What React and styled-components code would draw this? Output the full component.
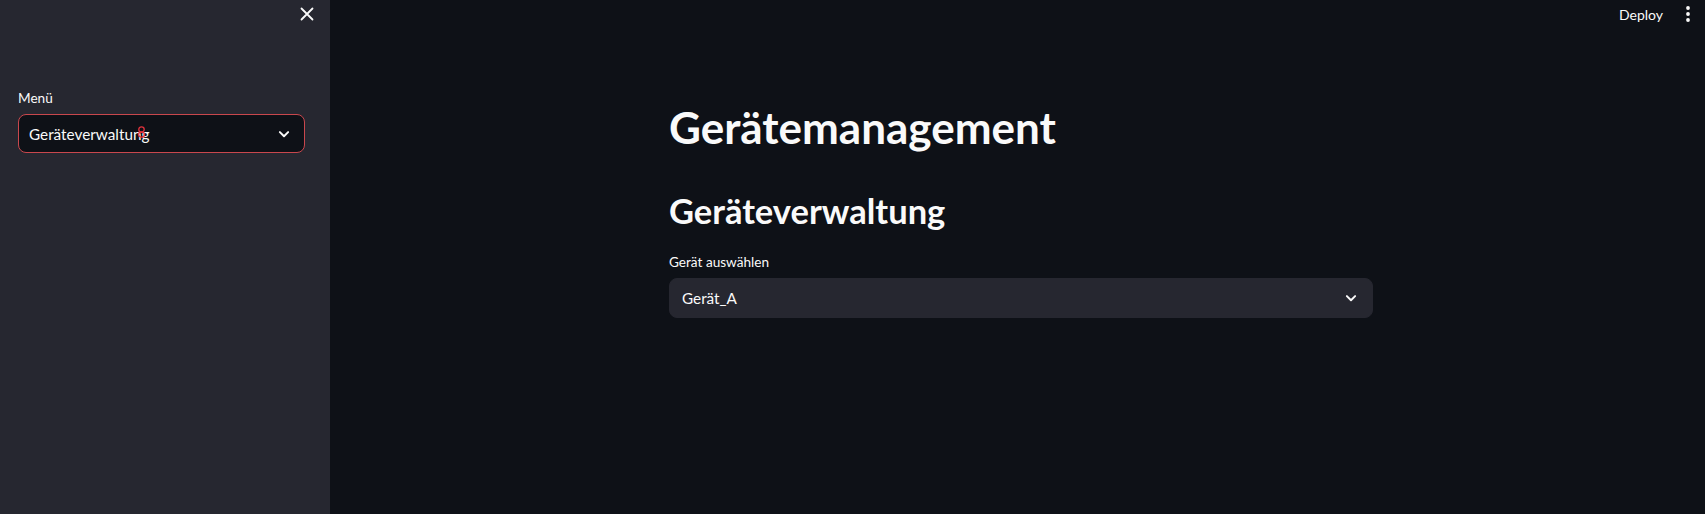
import React from "react";
import styled, { createGlobalStyle } from "styled-components";

const GlobalStyle = createGlobalStyle`
  html, body {
    margin: 0;
    padding: 0;
    background: #0e1117;
  }
  body {
    font-family: "Lato", "Noto Sans", sans-serif;
    color: #fafafa;
  }
`;

function ChevronDown({ size = 18 }) {
  return (
    <svg width={size} height={size} viewBox="0 0 24 24" fill="none">
      <path
        d="M6.5 9.5L12 15l5.5-5.5"
        stroke="#fafafa"
        strokeWidth="2.6"
        strokeLinecap="round"
        strokeLinejoin="round"
      />
    </svg>
  );
}

function CloseIcon() {
  return (
    <svg width="14" height="14" viewBox="0 0 14 14" fill="none">
      <path d="M1.5 1.5l11 11M12.5 1.5l-11 11" stroke="#fafafa" strokeWidth="1.8" strokeLinecap="round" />
    </svg>
  );
}

function MoreIcon() {
  return (
    <svg width="6" height="18" viewBox="0 0 6 18" fill="#fafafa">
      <circle cx="3" cy="3" r="1.9" />
      <circle cx="3" cy="9" r="1.9" />
      <circle cx="3" cy="15" r="1.9" />
    </svg>
  );
}

function PointerMark() {
  return (
    <svg width="9" height="12" viewBox="0 0 9 12" fill="none">
      <ellipse cx="4.5" cy="3.4" rx="2.7" ry="2.6" stroke="#e2323c" strokeWidth="1.3" />
      <path d="M1.5 8.4c0-1.4 1.3-2.2 3-2.2s3 0.8 3 2.2-1.3 2.7-3 2.7-3-1.3-3-2.7z" stroke="#e2323c" strokeWidth="1.3" />
    </svg>
  );
}

export default function App() {
  return (
    <>
      <GlobalStyle />
      <Page>
        <Sidebar>
          <SidebarHeader>
            <IconButton>
              <CloseIcon />
            </IconButton>
          </SidebarHeader>
          <SidebarBody>
            <Label>Menü</Label>
            <Select focused>
              <SelectValue>Geräteverwaltung</SelectValue>
              <ChevronDown />
              <Cursor>
                <PointerMark />
              </Cursor>
            </Select>
          </SidebarBody>
        </Sidebar>
        <Main>
          <Toolbar>
            <DeployButton>Deploy</DeployButton>
            <IconButton>
              <MoreIcon />
            </IconButton>
          </Toolbar>
          <Content>
            <Title>Gerätemanagement</Title>
            <Subtitle>Geräteverwaltung</Subtitle>
            <Label>Gerät auswählen</Label>
            <Select>
              <SelectValue>Gerät_A</SelectValue>
              <ChevronDown />
            </Select>
          </Content>
        </Main>
      </Page>
    </>
  );
}

const Page = styled.div`
  display: flex;
  height: 100vh;
  min-height: 514px;
  overflow: hidden;
`;

const Sidebar = styled.aside`
  width: 330px;
  flex-shrink: 0;
  background: #262730;
  display: flex;
  flex-direction: column;
`;

const SidebarHeader = styled.div`
  height: 28px;
  display: flex;
  align-items: center;
  justify-content: flex-end;
  padding-right: 16px;
`;

const IconButton = styled.button`
  display: flex;
  align-items: center;
  justify-content: center;
  background: none;
  border: none;
  padding: 0;
  cursor: pointer;
`;

const SidebarBody = styled.div`
  padding: 60px 25px 0 18px;
`;

const Label = styled.div`
  font-size: 13.6px;
  line-height: 20px;
  color: #fafafa;
  margin-bottom: 6px;
`;

const Select = styled.div`
  position: relative;
  box-sizing: border-box;
  display: flex;
  align-items: center;
  justify-content: space-between;
  height: ${(p) => (p.focused ? "39px" : "40px")};
  padding: ${(p) => (p.focused ? "0 11px 0 10px" : "0 12px")};
  border-radius: 8px;
  background: ${(p) => (p.focused ? "#0e1117" : "#262730")};
  border: 1px solid ${(p) => (p.focused ? "#c9474d" : "#262730")};
`;

const SelectValue = styled.span`
  font-size: 15.3px;
  color: #fafafa;
`;

const Cursor = styled.span`
  position: absolute;
  left: 118px;
  top: 11px;
  line-height: 0;
`;

const Main = styled.main`
  flex: 1;
  display: flex;
  flex-direction: column;
  padding-left: 7px;
`;

const Toolbar = styled.header`
  height: 28px;
  display: flex;
  align-items: center;
  justify-content: flex-end;
  gap: 22px;
  padding-right: 14px;
`;

const DeployButton = styled.button`
  background: none;
  border: none;
  padding: 0;
  font-family: "Lato", sans-serif;
  font-size: 14px;
  color: #fafafa;
  cursor: pointer;
`;

const Content = styled.div`
  width: 704px;
  margin: 0 auto;
  padding-top: 73px;
`;

const Title = styled.h1`
  margin: 0 0 36px;
  font-size: 44px;
  line-height: 1.2;
  font-weight: 700;
  color: #fafafa;
`;

const Subtitle = styled.h2`
  margin: 0 0 21px;
  font-size: 34.5px;
  line-height: 1.2;
  font-weight: 700;
  color: #fafafa;
`;
